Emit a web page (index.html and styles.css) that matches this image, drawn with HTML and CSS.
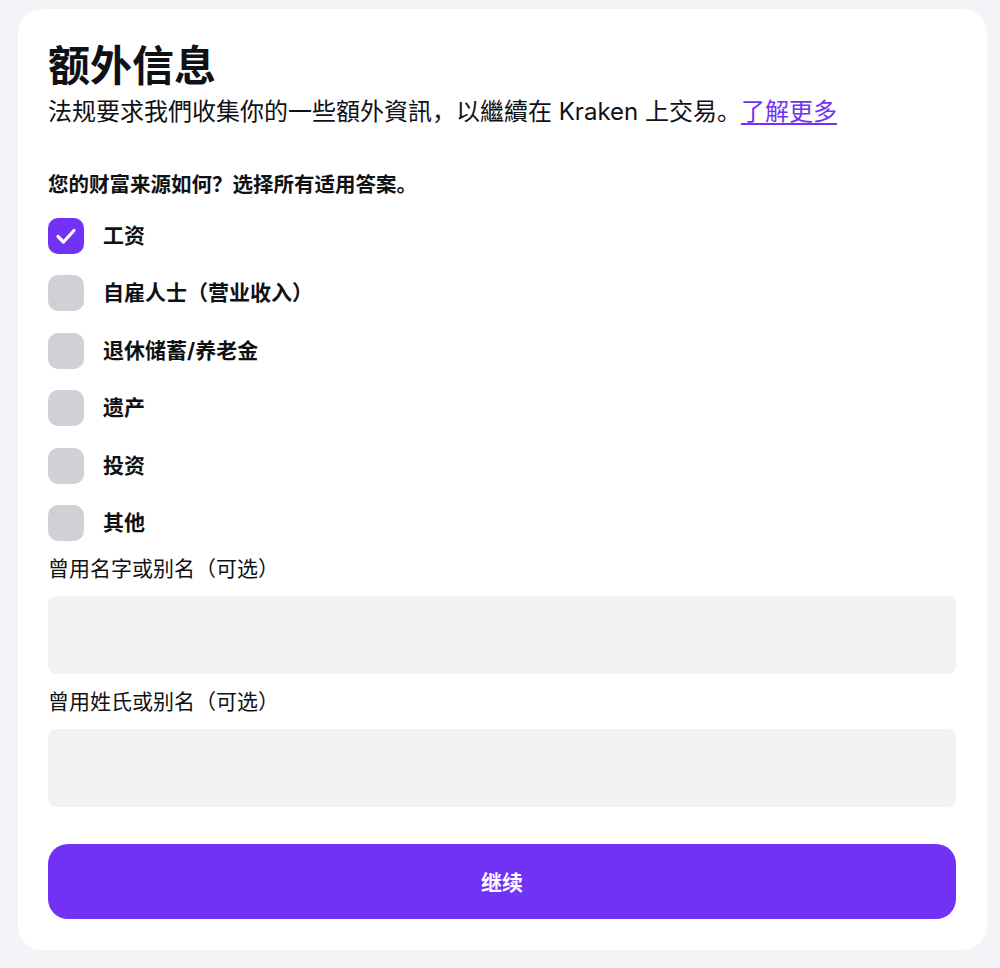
FILE: index.html
```html
<!DOCTYPE html>
<html lang="zh">
<head>
<meta charset="utf-8">
<title>额外信息</title>
<link rel="stylesheet" href="styles.css">
</head>
<body>
<main class="card">
  <h1 class="title">额外信息</h1>
  <p class="subtitle">法规要求我們收集你的一些額外資訊，以繼續在 Kraken 上交易。<a href="#" class="link">了解更多</a></p>

  <p class="question">您的财富来源如何？选择所有适用答案。</p>
  <ul class="options">
    <li class="option">
      <span class="box box-checked">
        <svg width="36" height="36" viewBox="0 0 36 36"><path d="M10 18.5 L15.5 24 L26 12.5" fill="none" stroke="#fff" stroke-width="3.2" stroke-linecap="round" stroke-linejoin="round"/></svg>
      </span>
      <span class="option-label">工资</span>
    </li>
    <li class="option"><span class="box"></span><span class="option-label">自雇人士（营业收入）</span></li>
    <li class="option"><span class="box"></span><span class="option-label">退休储蓄/养老金</span></li>
    <li class="option"><span class="box"></span><span class="option-label">遗产</span></li>
    <li class="option"><span class="box"></span><span class="option-label">投资</span></li>
    <li class="option"><span class="box"></span><span class="option-label">其他</span></li>
  </ul>

  <label class="field-label">曾用名字或别名（可选）</label>
  <div class="input"></div>

  <label class="field-label">曾用姓氏或别名（可选）</label>
  <div class="input"></div>

  <button class="btn">继续</button>
</main>
</body>
</html>
```

FILE: styles.css
```css
* { box-sizing: border-box; }
html, body { margin: 0; }
body {
  background: #f4f4f8;
  padding: 9px 13px 18px 18px;
  font-family: "Inter", "Noto Sans CJK SC", sans-serif;
  color: #101114;
}
.card {
  background: #ffffff;
  border-radius: 24px;
  padding: 29px 31px 31px 30px;
  display: flex;
  flex-direction: column;
}
.title {
  margin: 0;
  font-size: 42px;
  line-height: 50px;
  font-weight: 700;
  font-family: "Noto Sans CJK SC", sans-serif;
}
.subtitle {
  margin: 8px 0 0;
  font-size: 24px;
  line-height: 32px;
  font-weight: 400;
}
.link {
  color: #7132f5;
  text-decoration: underline;
  text-underline-offset: 3px;
}
.question {
  margin: 43px 0 0;
  font-size: 20.5px;
  line-height: 24px;
  font-weight: 700;
  font-family: "Noto Sans CJK SC", sans-serif;
}
.options {
  list-style: none;
  margin: 23px 0 0;
  padding: 0;
  display: flex;
  flex-direction: column;
  gap: 21.4px;
}
.option {
  display: flex;
  align-items: center;
  gap: 19px;
}
.box {
  width: 36px;
  height: 36px;
  border-radius: 10px;
  background: #d0d1d6;
  display: flex;
  align-items: center;
  justify-content: center;
  flex-shrink: 0;
}
.box-checked { background: #7132f5; }
.option-label {
  font-size: 21px;
  line-height: 26px;
  font-weight: 700;
}
.field-label {
  margin-top: 15px;
  font-size: 21px;
  line-height: 26px;
  font-weight: 400;
}
.input {
  margin-top: 14px;
  height: 78px;
  background: #f2f2f4;
  border-radius: 8px;
}
.btn {
  margin-top: 37px;
  height: 75px;
  border: none;
  border-radius: 20px;
  background: #7132f5;
  color: #ffffff;
  font-family: "Noto Sans CJK SC", sans-serif;
  font-size: 21px;
  font-weight: 700;
}
```
